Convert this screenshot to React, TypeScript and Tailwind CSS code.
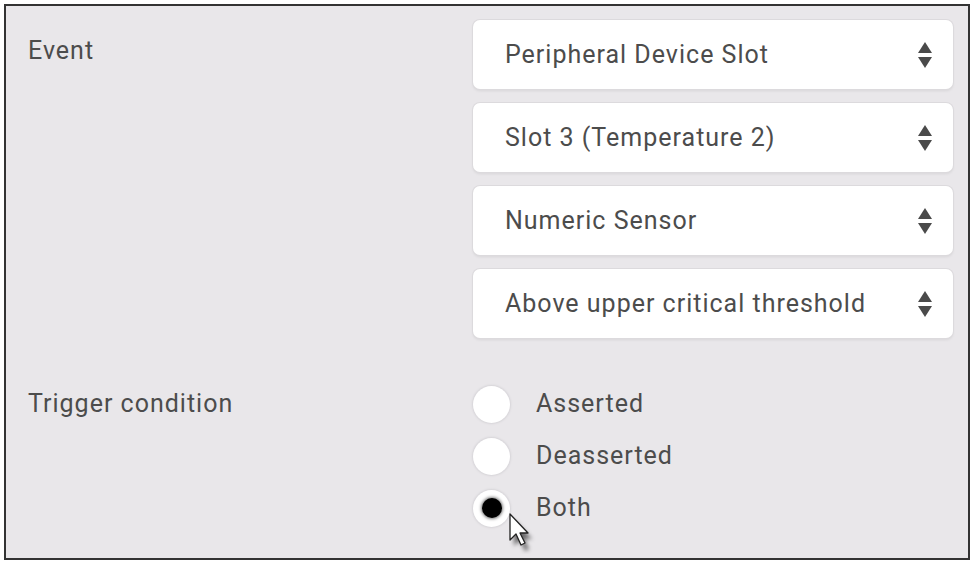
import React from "react";

const Arrows = () => (
  <svg width="16" height="28" viewBox="0 0 16 28" className="shrink-0">
    <path d="M8 1 L15 12 L1 12 Z" fill="#4a4a4a" />
    <path d="M1 16 L15 16 L8 27 Z" fill="#4a4a4a" />
  </svg>
);

const Select = ({ label }: { label: string }) => (
  <div className="flex h-[69px] w-[480px] items-center justify-between rounded-[7px] bg-white pl-[32px] pr-[20px] shadow-[0_0_0_1px_#dcdadd,0_2px_3px_rgba(0,0,0,0.08)]">
    <span className="text-[25px] tracking-[1px] text-[#4c4c4c]">{label}</span>
    <Arrows />
  </div>
);

const Radio = ({ label, checked }: { label: string; checked?: boolean }) => (
  <div className="flex h-[52px] items-center">
    <div className="flex h-[37px] w-[37px] items-center justify-center rounded-full bg-white shadow-[0_0_2px_1px_#d6d4d8]">
      {checked && <div className="h-[20px] w-[20px] rounded-full bg-black shadow-[0_0_3px_1px_rgba(0,0,0,0.5)]" />}
    </div>
    <span className="ml-[26px] text-[25px] tracking-[1px] text-[#4c4c4c]">{label}</span>
  </div>
);

const Cursor = () => (
  <svg width="30" height="42" viewBox="0 0 30 42" className="absolute left-[501px] top-[506px]">
    <defs>
      <filter id="sh" x="-50%" y="-50%" width="200%" height="200%">
        <feGaussianBlur stdDeviation="2" />
      </filter>
    </defs>
    <path d="M5 5 L5 31 L11 25 L16 36 L20 34 L15 24 L23 24 Z" fill="rgba(0,0,0,0.55)" filter="url(#sh)" transform="translate(2,3)" />
    <path d="M3 2 L3 28 L9 22 L14 33 L18 31 L13 21 L21 21 Z" fill="#ffffff" stroke="#222" strokeWidth="1.3" strokeLinejoin="round" />
  </svg>
);

export default function App() {
  return (
    <div className="h-[564px] w-[976px] bg-white pl-[4px] pt-[4px]" style={{ fontFamily: "Roboto, 'Liberation Sans', sans-serif" }}>
      <div className="relative h-[556px] w-[966px] border-2 border-[#333] bg-[#e9e7ea] pl-[22px] pr-[15px] pt-[14px]">
        <div className="flex">
          <div className="w-[445px] pt-[17px] text-[25px] leading-[28px] tracking-[1px] text-[#4c4c4c]">Event</div>
          <div className="flex flex-col gap-[14px]">
            <Select label="Peripheral Device Slot" />
            <Select label="Slot 3 (Temperature 2)" />
            <Select label="Numeric Sensor" />
            <Select label="Above upper critical threshold" />
          </div>
        </div>
        <div className="mt-[40px] flex">
          <div className="w-[445px] pt-[12px] text-[25px] leading-[28px] tracking-[1px] text-[#4c4c4c]">Trigger condition</div>
          <div className="flex flex-col">
            <Radio label="Asserted" />
            <Radio label="Deasserted" />
            <Radio label="Both" checked />
          </div>
        </div>
        <Cursor />
      </div>
    </div>
  );
}
